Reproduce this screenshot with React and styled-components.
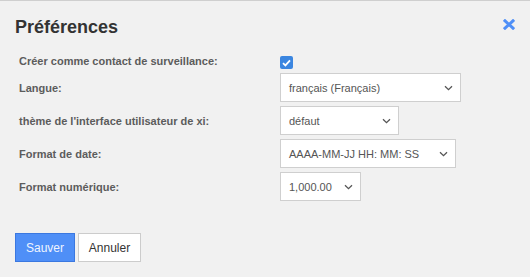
import React from 'react';
import styled, { createGlobalStyle } from 'styled-components';

const Global = createGlobalStyle`
    html, body {
        margin: 0;
        padding: 0;
        background: #f1f1f1;
    }
    body {
        font-family: "Liberation Sans", Arial, sans-serif;
    }
`

const Dialog = styled.div`
    width: 530px;
    height: 277px;
    box-sizing: border-box;
    border-top: 1px solid #cfcfcf;
    background: #f1f1f1;
    padding: 0 15px;
    display: flex;
    flex-direction: column;
`
const Header = styled.div`
    display: flex;
    justify-content: space-between;
    align-items: center;
    height: 52px;
    padding-top: 1px;
    box-sizing: border-box;
`
const Title = styled.h2`
    margin: 0;
    font-size: 18px;
    font-weight: 700;
    color: #333;
`
const Close = styled.button`
    border: 0;
    background: none;
    padding: 0;
    margin-right: 0;
    margin-top: -6px;
    display: flex;
    cursor: pointer;
`
const Form = styled.div`
    display: grid;
    grid-template-columns: 261px auto;
    grid-auto-rows: auto;
    row-gap: 4px;
    align-items: center;
    padding-left: 4px;
`
const Label = styled.label`
    font-size: 11px;
    font-weight: 700;
    color: #5c5c5c;
`
const Field = styled.div`
    display: flex;
    height: ${props => props.$h || 29}px;
    align-items: center;
`
const Checkbox = styled.span`
    width: 13px;
    height: 13px;
    border-radius: 2px;
    background: #3b86e0;
    display: flex;
    align-items: center;
    justify-content: center;
    margin-top: 3px;
`
const Select = styled.div`
    width: ${props => props.$w}px;
    height: 29px;
    box-sizing: border-box;
    border: 1px solid #cfcfcf;
    background: #fff;
    display: flex;
    align-items: center;
    justify-content: space-between;
    padding: 0 7px 0 8px;
    font-size: 11px;
    color: #555;
`
const Footer = styled.div`
    display: flex;
    gap: 3px;
    margin-top: 32px;
`
const Button = styled.button`
    height: 29px;
    width: ${props => props.$w}px;
    box-sizing: border-box;
    font-family: "Liberation Sans", Arial, sans-serif;
    font-size: 12px;
    padding: 0;
    border: 1px solid ${props => props.$primary ? '#3b78e0' : '#cccccc'};
    background: ${props => props.$primary ? '#4f8ff7' : '#fff'};
    color: ${props => props.$primary ? '#eef4ff' : '#333'};
`

const Chevron = () => (
    <svg width="9" height="6" viewBox="0 0 9 6">
        <path d="M1 1.2 L4.5 4.6 L8 1.2" fill="none" stroke="#555" strokeWidth="1.3" />
    </svg>
)

const Sel = ({ w, children }) => (
    <Select $w={w}>
        <span>{children}</span>
        <Chevron />
    </Select>
)

const App = () => {
    return (
        <Dialog>
            <Global />
            <Header>
                <Title>Préférences</Title>
                <Close aria-label="Fermer">
                    <svg width="12" height="11" viewBox="0 0 12 11">
                        <path d="M2 1.8 L10 9.2 M10 1.8 L2 9.2" stroke="#4f8ff7" strokeWidth="3" strokeLinecap="square" />
                    </svg>
                </Close>
            </Header>
            <Form>
                <Label>Créer comme contact de surveillance:</Label>
                <Field $h={16}>
                    <Checkbox>
                        <svg width="9" height="8" viewBox="0 0 9 8">
                            <path d="M1 4.2 L3.4 6.4 L8 1.4" fill="none" stroke="#fff" strokeWidth="1.8" />
                        </svg>
                    </Checkbox>
                </Field>
                <Label>Langue:</Label>
                <Field><Sel w={181}>français (Français)</Sel></Field>
                <Label>thème de l'interface utilisateur de xi:</Label>
                <Field><Sel w={119}>défaut</Sel></Field>
                <Label>Format de date:</Label>
                <Field><Sel w={176}>AAAA-MM-JJ HH: MM: SS</Sel></Field>
                <Label>Format numérique:</Label>
                <Field><Sel w={81}>1,000.00</Sel></Field>
            </Form>
            <Footer>
                <Button $primary $w={60}>Sauver</Button>
                <Button $w={63}>Annuler</Button>
            </Footer>
        </Dialog>
    );
};

export default App;
